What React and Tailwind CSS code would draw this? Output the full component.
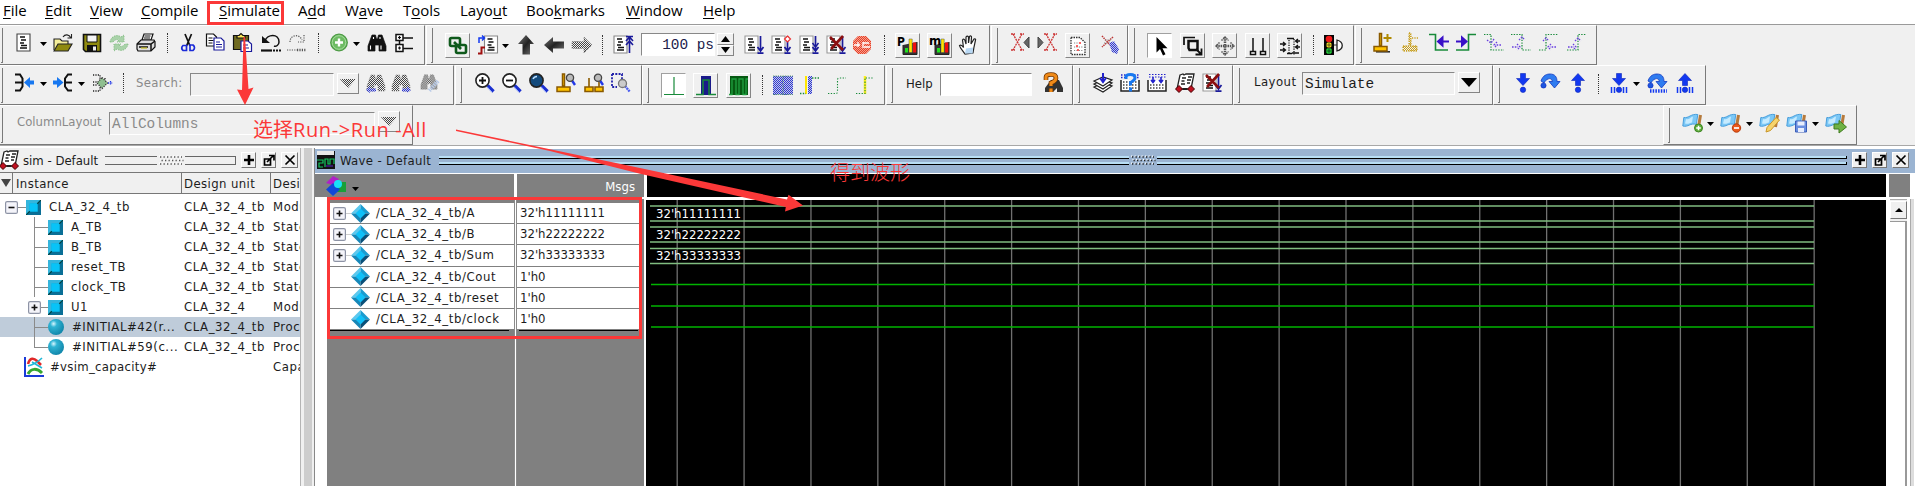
import React from "react";

const dot = "1.2 1.2";

const DocShape = ({ x = 1, c = "#444", d }) => (
  <g stroke={c} fill="#fff" strokeWidth="1.1">
    <path d={`M${x} 1h13v17h-13z`} strokeDasharray={d} />
    <path d={`M${x + 3} 4h5M${x + 4} 7h5M${x + 3} 10h4M${x + 4} 12.5h6M${x + 3} 15h7`} stroke="#111" strokeWidth="1.4" />
  </g>
);
const DownBlue = ({ x = 16.5 }) => (
  <path d={`M${x} 1v15M${x - 3} 12l3 4 3-4M${x - 3} 18.2h6`} stroke="#1a1a9a" strokeWidth="1.7" fill="none" />
);
const RedX = () => <path d="M4 2l13 13M17 1L5 14" stroke="#8b0f0f" strokeWidth="2.6" fill="none" />;
const Lens = ({ fill = "#fff", children }) => (
  <g>
    <path d="M12.5 12.5l6 6" stroke="#1a2fd0" strokeWidth="3.4" />
    <path d="M11.8 13.5l5 5.5" stroke="#9db4ff" strokeWidth="1" />
    <circle cx="7.5" cy="7.5" r="6.6" fill={fill} stroke="#222" strokeWidth="1.6" />
    {children}
  </g>
);
const MiniLens = () => (
  <g>
    <path d="M16 7.5l3 4.5" stroke="#2238e8" strokeWidth="2.4" />
    <circle cx="14" cy="4.8" r="3.6" fill="#bbb" stroke="#444" strokeWidth="1.3" />
  </g>
);
const Binoc = ({ hatch }) => (
  <g stroke={hatch ? "#777" : "#111"} strokeDasharray={hatch ? dot : undefined} strokeWidth=".7" fill={hatch ? "url(#hatch)" : "#111"}>
    <path d="M5 2h3.5l1 4h1l1-4H15l4 11v5h-7v-6H8v6H1v-5z" />
    {!hatch && <path d="M3.5 12.5v4M14 12.5v4M6.5 4v2M13 4v2" stroke="#fff" strokeWidth="1.1" />}
  </g>
);
const Bars = () => (
  <g>
    <path d="M5 9v9.5h14V6" fill="#333" stroke="#222" />
    <path d="M7 12h3v4.5H7z" fill="#20e020" />
    <path d="M11 3h3.2v13.5H11z" fill="#ffe600" stroke="#555" strokeWidth=".5" />
    <path d="M15 6.5h3.2v10H15z" fill="#f01010" />
  </g>
);
const Flag = () => (
  <g>
    <path d="M17.5 2l-2 12" stroke="#b57a3c" strokeWidth="3" />
    <path d="M.8 4.5c5 1 7-4 14-3l-1.500 10c-6-2-8 3-13.500 1.500z" fill="#7cc8f6" stroke="#4a9fdc" strokeWidth="1" />
    <path d="M3 6c3 1 4-1.500 7-2.500l-1 6c-2 .5-4 2-7 1z" fill="#c6ebff" />
  </g>
);
const Step = ({ up, base }) => (
  <g fill="#1238f0" stroke="#0b25b8" strokeWidth=".6">
    {up ? <path d="M10 .5l6.500 7h-4v5h-5v-5h-4z" /> : <path d="M7.500 .5h5v5h4L10 12.500 3.500 5.500h4z" />}
    <circle cx="10" cy="16.800" r="2.700" />
    {base && <path d="M2.500 14v6M5.500 14v6M14.500 14v6M17.500 14v6" stroke="#1238f0" strokeWidth="1.500" />}
  </g>
);
const Over = ({ base }) => (
  <g>
    <path d="M1 8C3 2 7 1 10 1c5 0 7 3 7 7.500h3L14.500 15 9 8.500h3.500C12 6 10 5 8 6 6 7 5 8 4 10z" fill="#2f7cf0" stroke="#1238c0" strokeWidth=".8" />
    <circle cx="3.500" cy="12.500" r="2.600" fill="#1c55e0" stroke="#0b25b8" strokeWidth=".6" />
    {base && <path d="M3 18h17" stroke="#1238f0" strokeWidth="3.600" strokeDasharray="1.500 1.200" />}
  </g>
);
const Pin = ({ s = 12 }) => (
  <g fill="#ffc400" stroke="#8a5a00" strokeWidth="1.500">
    <path d={`M${3 + s / 2 - 1} 1h2v12h-2zM3 14h${s}v4.500h-${s}z`} />
  </g>
);

const icons = {
  doc: <DocShape x={3} />,
  open: (
    <g stroke="#222" strokeWidth="1.1">
      <path d="M1 17V6h6l2 2h6v3" fill="#f5ef9a" /><path d="M1 18l4-7h14l-4 7z" fill="#8f8a10" />
      <path d="M10 4c2-3 6-3 8 1M18.500 1v4h-4" fill="none" />
    </g>
  ),
  save: (
    <g>
      <path d="M1.500 1.500h17v17h-15l-2-2z" fill="#8f8a10" stroke="#111" strokeWidth="1.600" />
      <path d="M5 2h10v7H5z" fill="#f4f4f4" stroke="#111" /><path d="M5 12h10v6H5z" fill="#111" /><path d="M11 13.500h3v4h-3z" fill="#eee" />
    </g>
  ),
  refresh: (
    <g fill="#a9d2a9" stroke="#86bd86" strokeWidth="1" strokeDasharray={dot}>
      <path d="M1 9c1-6 7-8 11-5l3-2v7H8l2-2c-3-1-4 0-6 2z" /><path d="M19 11c-1 6-7 8-11 5l-3 2v-7h7l-2 2c3 1 4 0 6-2z" />
    </g>
  ),
  print: (
    <g stroke="#111" strokeWidth="1.200">
      <path d="M6 7l2-6h9l-2 6z" fill="#fff" /><path d="M8.500 3h6M8 5h6" />
      <path d="M1 11l4-4h13l1 2v5l-4 4H2l-1-2z" fill="#ddd" /><path d="M1 11h14l4-3M15 11v7M3 14h9" fill="none" strokeWidth="1.500" /><path d="M5 15h6" stroke="#c9c020" />
    </g>
  ),
  cut: (
    <g fill="none" strokeWidth="1.700">
      <path d="M7 1l5 12M13.500 1L8.500 13" stroke="#111" /><path d="M5 12.500h3.500v5H5q-2.500-2.500 0-5zM12 12h3q3 2.500 0 5.500h-3z" stroke="#1b2bd8" />
    </g>
  ),
  copy: (
    <g fill="#fff" strokeWidth="1.200">
      <path d="M1.500 1h7l3 3v9h-10z" stroke="#111" /><path d="M3.500 5h4M3.500 7.500h5M3.500 10h4" stroke="#111" />
      <path d="M9 5h7l3 3v9H9z" stroke="#1a1a9a" /><path d="M11 9h4M11 11.500h6M11 14h6" stroke="#1a1a9a" />
    </g>
  ),
  paste: (
    <g strokeWidth="1.200">
      <path d="M1.500 2.500h15v14h-15z" fill="#6f6a20" stroke="#111" /><path d="M5 5V2.500h2L9 .5l2 2h2V5z" fill="#ffe95a" stroke="#111" />
      <path d="M9 8h7l3.500 3v7.500H9z" fill="#fff" stroke="#1a1a9a" /><path d="M11 12h5M11 15h6" stroke="#1a1a9a" />
    </g>
  ),
  undo: (
    <g fill="none" stroke="#111" strokeWidth="1.500">
      <path d="M4 8c2-7 14-8 14 1 0 3-3 5-5 4" /><path d="M1 3v7h8z" fill="#111" stroke="none" /><path d="M0 17.500h11" strokeWidth="2.200" /><path d="M12 17.500h8" strokeWidth="2.200" strokeDasharray="2 1" />
    </g>
  ),
  redo: (
    <g fill="none" stroke="#555" strokeWidth="1.200" strokeDasharray={dot}>
      <path d="M3 9c0-8 10-8 12-2M17 2v7h-6M0 17h11" /><path d="M10 17h9" strokeWidth="2.400" />
    </g>
  ),
  add: (
    <g>
      <circle cx="10" cy="9.500" r="8.300" fill="#6dbb63" stroke="#4c9a44" strokeWidth="1.200" /><circle cx="10" cy="9.500" r="6.800" fill="none" stroke="#a5dc9c" />
      <path d="M10 5.500v8M6 9.500h8" stroke="#fff" strokeWidth="2.400" />
    </g>
  ),
  binoc: <Binoc />,
  tree: (
    <g fill="#fff" stroke="#111" strokeWidth="1.500">
      <path d="M2 1.500h7v6H2zM2 11.500h7v7H2zM9.500 5H19M9.500 15.500H19M5.500 8v3" /><path d="M4 4.500h3M4 15h3M5.500 3v3M5.500 13.500v3" strokeWidth="1.200" />
    </g>
  ),
  link: (
    <g fill="none" stroke="#0f5a1c" strokeWidth="2.600"><rect x="2" y="2" width="10" height="8" rx="1.500" /><rect x="8" y="9" width="10" height="8" rx="1.500" /><path d="M6 6l7 7" /></g>
  ),
  wavedoc: (
    <g>
      <DocShape x={6.500} c="#888" /><path d="M1 8V3h5M4 .5L6.500 3 4 5.500" stroke="#1238f0" strokeWidth="1.500" fill="none" /><path d="M0 18.500h3.500v-6H7" stroke="#a01010" strokeWidth="2" fill="none" />
    </g>
  ),
  up: <path d="M10 0l8 9h-4v10.500H6.500V9H2z" fill="url(#steel)" />,
  left: <path d="M0 10l9-8v4.500h11v7H9V18z" fill="url(#steel)" />,
  right: <path d="M20 10l-8-8v4.500H0v7h12V18z" fill="url(#hatch)" stroke="#777" strokeDasharray={dot} strokeWidth=".8" />,
  restart: (<g><DocShape c="#888" /><path d="M13 1.500h7M16.500 2v16M13 6l3.500-4L20 6M13 10l3.500-4 3.500 4" stroke="#1a1a9a" strokeWidth="1.600" fill="none" /></g>),
  run: (<g><DocShape c="#999" /><DownBlue /></g>),
  runc: (<g><DocShape c="#999" /><DownBlue /><path d="M16.500 1l3 3-3 3-3-3z" fill="#fff" stroke="#e33" strokeWidth="1.200" /></g>),
  runall: (<g><DocShape c="#999" /><DownBlue /><path d="M13.500 8l3 4 3-4" stroke="#1a1a9a" strokeWidth="1.500" fill="none" /></g>),
  brk: (<g><DocShape c="#999" /><DownBlue /><RedX /></g>),
  stop: (<g><path d="M6 1h8l5 5v8l-5 5H6l-5-5V6z" fill="url(#redhatch)" /><path d="M2 10h6M6 7v5M11 7v6M11 8h6M12 12h6" stroke="#fff" strokeWidth="1.300" fill="none" /></g>),
  perf: (<g><Bars /><text x="-1" y="10" className="font-['DejaVu_Sans',sans-serif] text-[12px] font-bold">P</text></g>),
  mem: (<g><Bars /><text x="-1" y="9" className="font-['DejaVu_Sans',sans-serif] text-[13px] font-bold">m</text></g>),
  hand: (
    <g><path d="M6 19c-2-3-5-6-5.500-8.500 1.500-.8 3 .5 4 2L3.500 5c1-1.500 2-.5 2.500.5L7 9V2c1-1.500 2.200-1 2.500 0v6l1-6.500c1-1 2.200-.5 2 .7L12 9l3-5c1-.5 2 0 1.500 1L15 12l-1 6z" fill="#fff" stroke="#222" strokeWidth="1.200" /><path d="M6 18.500l1-5 7-1-.5 6z" fill="#b8d8f4" /></g>
  ),
  xl: (<g fill="none"><path d="M2 1l9 16M11 1L2 17M0 1h4M9 1h4M0 17h4M9 17h4" stroke="#c33" strokeWidth="1.300" strokeDasharray="2 .8" /><path d="M18 4l-5 5.500 5 5.500z" fill="#666" stroke="#444" /></g>),
  xr: (<g fill="none"><path d="M9 1l9 16M18 1L9 17M7 1h4M16 1h4M7 17h4M16 17h4" stroke="#c33" strokeWidth="1.300" strokeDasharray="2 .8" /><path d="M1 4l5 5.500L1 15z" fill="#666" stroke="#444" /></g>),
  dotdoc: (<g><path d="M3 1.500h9l5 5v12H3z" fill="#fff" stroke="#333" strokeWidth="1.300" strokeDasharray="1.500 1" /><path d="M6 7h5M6 11h9M6 14.500h9" stroke="#888" strokeDasharray={dot} /><path d="M9 9v2M12 6v2M10 13v2" stroke="#f33" strokeWidth="1.500" /></g>),
  xpen: (<g><path d="M2 1l10 11M13 2L2 12" stroke="#b33" strokeWidth="1.500" strokeDasharray="1.500 .8" /><path d="M5 5h6M4 8h5" stroke="#888" strokeDasharray={dot} /><path d="M9 8l5-2 5 8-2 5-5-2z" fill="url(#bluehatch)" /></g>),
  cursor: <path d="M6.500 1v15.500l3.500-3.500 3 6.500 2.500-1.200-3-6h5z" fill="#000" />,
  zoomsel: (<g fill="none" stroke="#111"><path d="M1 9V1.500h11" strokeWidth="1.700" /><path d="M5.500 12V5h9v9h-8z" strokeWidth="2.500" /><path d="M13 13l5 5M18.500 12.500v6h-6" strokeWidth="1.800" /></g>),
  move: (<g fill="none" stroke="#555" strokeWidth="1.500" strokeDasharray="1.500 .8"><path d="M10 1v18M1 10h18" strokeWidth="2.500" /><path d="M6.500 4.500L10 1l3.500 3.500M6.500 15.500L10 19l3.500-3.500M4.500 6.500L1 10l3.500 3.500M15.500 6.500L19 10l-3.500 3.500" /></g>),
  twocur: (<g fill="#fff" stroke="#111" strokeWidth="1.500"><path d="M5 2v13M15 2v13M2.500 15.500h5v3h-5zM12.500 15.500h5v3h-5z" /></g>),
  edges: (<g fill="none" stroke="#111" strokeWidth="1.300"><path d="M7 2.500h7M7 17.500h5" strokeWidth="1.500" /><path d="M9 4v14M14 3v16" strokeDasharray={dot} /><path d="M0 8h5M3 6l2.500 2L3 10M0 14h5M3 12l2.500 2L3 16M20 5h-4M18 3l-2.500 2L18 7M20 11h-4M18 9l-2.500 2 2.500 2M12 17h7" /></g>),
  light: (
    <g><path d="M1 0h10v20H1z" fill="#050505" /><circle cx="6" cy="4" r="3.300" fill="#f01818" /><circle cx="6" cy="10" r="2.700" fill="#f6e22a" /><circle cx="6" cy="16" r="3" fill="#22d13a" /><path d="M3 10h6M6 7v6M3 16h6M6 13v6" stroke="#111" strokeWidth=".6" /><path d="M14 5v11c7-2 7-9 0-11z" fill="#fff" stroke="#222" strokeWidth="1.300" /><path d="M11 10h3" stroke="#333" /></g>
  ),
  pinadd: (<g><path d="M3 18.800h14" stroke="#222" strokeWidth="1.500" /><g transform="translate(-2 -.5)"><Pin s={13} /></g><path d="M14.500 1v8M10.500 5h8" stroke="#b08a00" strokeWidth="2" /></g>),
  pindel: (<g fill="url(#goldhatch)" stroke="#c8a020" strokeWidth="1.300" strokeDasharray={dot}><path d="M8 0h2v12H8zM2 13h14v5H2zM11 5h7" /></g>),
  prev: (<g fill="none"><path d="M0 1.500h6.500V17H19" stroke="#188a3a" strokeWidth="1.600" /><path d="M20 8.500h-8M13.500 4.500l-4.500 4 4.500 4z" stroke="#3a10c8" strokeWidth="2" fill="#3a10c8" /></g>),
  next: (<g fill="none"><path d="M0 17h12.500V1.500H20" stroke="#188a3a" strokeWidth="1.600" /><path d="M0 8.500h7M6 4.500l4.500 4-4.500 4z" stroke="#3a10c8" strokeWidth="2" fill="#3a10c8" /></g>),
  e1: (<g fill="none"><path d="M0 1.500h7V17h13" stroke="#188a3a" strokeWidth="1.200" strokeDasharray="1.400 1.300" /><path d="M3 7l4 3 3-4M17 12h-6M13 9l-3 3 3 3" stroke="#6a40e0" strokeWidth="1.300" strokeDasharray="1.600 1.200" /></g>),
  e2: (<g fill="none"><path d="M0 1.500h11V17h9" stroke="#188a3a" strokeWidth="1.200" strokeDasharray="1.400 1.300" /><path d="M8 7l3-3 3 3M1 14h6M6 11l3 3-3 3" stroke="#6a40e0" strokeWidth="1.300" strokeDasharray="1.600 1.200" /></g>),
  e3: (<g fill="none"><path d="M0 17h7V1.500h12" stroke="#188a3a" strokeWidth="1.200" strokeDasharray="1.400 1.300" /><path d="M4 8l3-3 3 3M17 14h-6M12 11l-3 3 3 3" stroke="#6a40e0" strokeWidth="1.300" strokeDasharray="1.600 1.200" /></g>),
  e4: (<g fill="none"><path d="M1 17h11V1.500h8" stroke="#188a3a" strokeWidth="1.200" strokeDasharray="1.400 1.300" /><path d="M9 8l3-3 3 3M2 14h6M7 11l3 3-3 3" stroke="#6a40e0" strokeWidth="1.300" strokeDasharray="1.600 1.200" /></g>),
  drv: (<g fill="none"><path d="M1 1.500h5l2.500 4v8l-2.500 4H1M1 9.500h7" stroke="#111" strokeWidth="2" /><path d="M20 7.500v4h-4v3.500L10 9.500l6-5.500v3.500z" fill="#1878f0" /></g>),
  rdr: (<g fill="none"><path d="M19 1.500h-4l-3 4v8l3 4h4M12 9.500h7" stroke="#111" strokeWidth="2" /><path d="M0 7.500v4h4v3.500l6.500-5.500L4 4v3.500z" fill="#1878f0" /></g>),
  gate: (<g fill="none" stroke="#222" strokeWidth="1.300" strokeDasharray={dot}><path d="M0 2h7v4M0 9h4M0 12h4M0 18h7v-4M12 5v4" /><path d="M9 4.500L14.500 10 9 15.500 4 10z" fill="#8fbf8f" stroke="#333" /><path d="M15 10h5M17.500 8v4" stroke="#2238e8" /></g>),
  bl: (<g><Binoc hatch /><path d="M0 17l4-4v2.500h6v3H4V20z" fill="url(#bluehatch)" /></g>),
  br: (<g><Binoc hatch /><path d="M20 17l-4-4v2.500h-5v3h5V20z" fill="url(#bluehatch)" /></g>),
  bp: (<g><g transform="scale(.9)"><Binoc hatch /></g><path d="M18 8l-9 10" stroke="#b9cbe8" strokeWidth="4" strokeDasharray="1.500 .8" /></g>),
  zin: <Lens><path d="M7.500 4v7M4 7.500h7" stroke="#111" strokeWidth="1.800" /></Lens>,
  zout: <Lens><path d="M4 7.500h7" stroke="#111" strokeWidth="1.800" /></Lens>,
  zfull: <Lens fill="#134a7c"><path d="M4 6c1-2 2-2.500 4-2.500" stroke="#bfe0ff" strokeWidth="1.500" fill="none" /></Lens>,
  zcur: (<g><g transform="translate(-2 0)"><Pin s={13} /></g><MiniLens /></g>),
  ztwo: (<g><path d="M5 5v9M1 14h8v4.500H1zM15 9v5M11 14h8v4.500h-8z" fill="#ffc400" stroke="#8a5a00" strokeWidth="1.600" /><MiniLens /></g>),
  zsel: (<g><path d="M1 1h10v6M1 1v13h5" fill="none" stroke="#2222aa" strokeWidth="1.800" strokeDasharray="2 1.300" /><path d="M14 13l5 6" stroke="#4a5cf0" strokeWidth="2.400" strokeDasharray="2 .6" /><circle cx="11.500" cy="10.500" r="4" fill="#ccc" stroke="#777" strokeWidth="1.300" /></g>),
  w1: <path d="M0 18.500h20M10 1v17" stroke="#188a3a" strokeWidth="1.200" fill="none" />,
  w2: (<g fill="none"><path d="M5 0h10v19H5z" fill="#1a1a8a" /><path d="M0 18.500h7V4h6v14.500h7" stroke="#188a3a" strokeWidth="1.500" /></g>),
  w3: (<g fill="none"><path d="M1 0h18v19H1z" fill="#065a12" /><path d="M0 18.500h3V3h4v15.500h3V3h4v15.500h3V3h2" stroke="#1fa040" strokeWidth="1.300" /></g>),
  w4: (<g><path d="M0 1h20v19H0z" fill="url(#bluehatch)" /><path d="M0 1h20M0 19.500h20M10 1v18" stroke="#5a9a6a" strokeDasharray={dot} /></g>),
  w5: (<g fill="none"><path d="M5 1h2v18H5z" fill="#ffe600" /><path d="M8 1h4v18H8z" fill="url(#bluehatch)" /><path d="M0 18.500h6M12 3h7" stroke="#188a3a" strokeWidth="1.300" strokeDasharray="1.400 1.400" /></g>),
  w6: <path d="M1 18.500h8q1.500 0 1.500-2V5q0-2 2-2H19" stroke="#188a3a" strokeWidth="1.100" strokeDasharray="1.300 1.500" fill="none" />,
  w7: (<g fill="none"><path d="M10 1v18" stroke="#ffee20" strokeWidth="2.500" /><path d="M1 18.500h9V3h9" stroke="#188a3a" strokeWidth="1.100" strokeDasharray="1.300 1.500" /></g>),
  helpb: (<g><path d="M8 7h8l4 8v4h-6v-4l-4 4H2v-4z" fill="#333" /><path d="M3 7V4q0-2.500 5-2.500t5 3.500q0 3-5 5v3M8 15.500v3.500" fill="none" stroke="#6b3200" strokeWidth="4.600" /><path d="M3 7V4q0-2.500 5-2.500t5 3.500q0 3-5 5v3M8 15.500v3.500" fill="none" stroke="#f08a18" strokeWidth="3.100" /></g>),
  stack: (<g fill="#fff" stroke="#222" strokeWidth="1.200"><path d="M1 14l9-4 9 3-9 6z" /><path d="M1 11l9-4 9 3-9 6z" /><path d="M1 8l9-4 9 3-9 6z" /><path d="M10 0v8M7 5l3 4 3-4" stroke="#2222cc" strokeWidth="2" fill="none" /></g>),
  gridq: (<g><path d="M1 7v11h18V7" fill="#fff" stroke="#222" strokeWidth="1.500" /><path d="M1 2h5M14 2h5M1 4.500h5M14 4.500h5" stroke="#2222cc" strokeWidth="1.300" strokeDasharray="1.500 1.500" /><path d="M3 9h15M3 12h15M3 15h15" stroke="#444" strokeWidth="1.300" strokeDasharray="1.500 1.500" /><path d="M6 6V4q0-2.500 4.500-2.500T15 5q0 2-4.500 4.500v3M10.500 14.500v4" stroke="#1878f0" strokeWidth="3" fill="none" /></g>),
  grida: (<g><path d="M1 7v11h18V7" fill="#fff" stroke="#222" strokeWidth="1.500" /><path d="M2 1.500h17M2 4h17" stroke="#2222cc" strokeWidth="1.200" strokeDasharray="1.500 1.500" /><path d="M3 12h15M3 15h15" stroke="#444" strokeWidth="1.300" strokeDasharray="1.500 1.500" /><path d="M6 4v5M4 7l2 2.500L8 7M14 4v5M12 7l2 2.500L16 7" stroke="#2222cc" strokeWidth="1.600" fill="none" /></g>),
  scroll: (
    <g><path d="M5 2l3-1 1 1 2-1h8l-3 15H2z" fill="#fff" stroke="#222" strokeWidth="1.300" /><path d="M7 5h4M6.500 8h3M6 11h4M13 4h4M12 7h4M12 10h3" stroke="#222" strokeWidth="1.300" /><path d="M4 12.500l3.500 3.500L4 19.500.5 16zM16 12.500l3.500 3.500-3.500 3.500-3.500-3.500z" fill="#c01020" stroke="#400" strokeWidth="1" /><path d="M8 16h4" stroke="#111" strokeWidth="1.500" /></g>
  ),
  into: <Step />, over: <Over />, out: <Step up />, intoc: <Step base />, overc: <Over base />, outc: <Step up base />,
  fadd: (<g><Flag /><circle cx="15.500" cy="15" r="4" fill="#5fae3d" stroke="#3d8422" /><path d="M15.500 12.700v4.600M13.200 15h4.600" stroke="#fff" strokeWidth="1.500" /></g>),
  fdel: (<g><Flag /><circle cx="15.500" cy="15" r="4.200" fill="#ea5a1c" stroke="#b93c0c" /><path d="M13 15h5" stroke="#fff" strokeWidth="1.700" /></g>),
  fedit: (<g><Flag /><path d="M19.500 7l-9 10.500-4.500 1.500 1-4.500 9-10z" fill="#f6d36b" stroke="#c9962a" /></g>),
  fsave: (<g><Flag /><path d="M8.500 8h11v11h-11z" fill="#6a8fe0" stroke="#3a5cb8" /><path d="M10.500 8.500h7v4h-7zM11 15h6v4h-6z" fill="#e8eefc" /></g>),
  fgo: (<g><Flag /><path d="M8 11h5V7.500l7.500 6.500-7.500 6v-4H8z" fill="#6fb244" stroke="#3f7d1e" /></g>),
};

const Icon = ({ n, c = "" }) => (
  <svg viewBox="0 0 20 20" className={`h-5 w-5 shrink-0 overflow-visible ${c}`}>{icons[n]}</svg>
);
const Btn = ({ n, c = "", on }) => (
  <div className={`flex h-[25px] w-[25px] shrink-0 items-center justify-center border-[1.5px] ${on ? "border-[#a0a0a0] border-r-white border-b-white bg-white" : "border-white border-r-[#858585] border-b-[#858585] bg-[#f0f0f0]"} ${c}`}>
    <svg viewBox="0 0 20 20" className="h-5 w-5 shrink-0 overflow-visible">{icons[n]}</svg>
  </div>
);
const Caret = ({ c = "" }) => (
  <svg viewBox="0 0 7 4" className={`mt-[9px] h-1 w-[7px] shrink-0 ${c}`}><path d="M0 0h7L3.500 4z" fill="#000" /></svg>
);
const Sep = ({ c = "" }) => <div className={`h-5 w-px shrink-0 border-l border-dotted border-[#333] ${c}`} />;
const Group = ({ c, children }) => (
  <div className={`flex h-10 shrink-0 items-start border border-white border-r-[#7a7a7a] border-b-[#7a7a7a] pt-[7px] pl-1 ${c}`}>
    <div className="-mt-[5px] h-[35px] w-[2px] shrink-0 border-r border-b border-[#7a7a7a]" />
    {children}
  </div>
);
const Field = ({ c = "", children }) => (
  <div className={`flex h-[23px] shrink-0 items-center border border-t-[#888] border-l-[#888] border-r-white border-b-white pt-px pl-[2px] font-['Liberation_Mono',monospace] text-[14.400px] ${c}`}>{children}</div>
);
const Drop = ({ c = "", grey }) => (
  <div className={`flex h-[21px] w-[22px] shrink-0 items-center justify-center border-[1.5px] border-white border-r-[#858585] border-b-[#858585] ${c}`}>
    <svg viewBox="0 0 16 9" className="h-[9px] w-4"><path d="M0 0h16L8 9z" fill={grey ? "url(#hatch)" : "#000"} /></svg>
  </div>
);

const menus = [
  ["", "F", "ile", "w-[42px]"], ["", "E", "dit", "w-[45px]"], ["", "V", "iew", "w-[51px]"], ["", "C", "ompile", "w-[78px]"],
  ["", "S", "imulate", "w-[79px]"], ["A", "d", "d", "w-[47px]"], ["W", "a", "ve", "w-[58px]"], ["T", "o", "ols", "w-[57px]"],
  ["Layo", "u", "t", "w-[66px]"], ["Boo", "k", "marks", "w-[100px]"], ["", "W", "indow", "w-[77px]"], ["", "H", "elp", "w-[50px]"],
];

const Cube = () => (
  <svg viewBox="0 0 16 16" className="h-[15px] w-[15px] shrink-0">
    <path d="M0 0h16v16H0z" fill="#0a6f96" /><path d="M0 0h16L12 4H4v8l-4 4z" fill="#35b5dc" /><path d="M3.500 3.500h9v9h-9z" fill="#08c3f7" /><path d="M0 16l4-4M12 4l4-4" stroke="#044" strokeWidth="1.300" />
  </svg>
);
const Ball = () => (
  <svg viewBox="0 0 16 16" className="h-4 w-4 shrink-0"><circle cx="8" cy="8" r="8" fill="url(#ball)" /></svg>
);
const Expand = ({ minus }) => (
  <svg viewBox="0 0 13 13" className="h-[13px] w-[13px] shrink-0">
    <rect x=".6" y=".6" width="11.800" height="11.800" rx="1.500" fill="#f4f4fa" stroke="#8d93a5" strokeWidth="1.200" />
    <path d={minus ? "M3.500 6.500h6" : "M3.500 6.500h6M6.500 3.500v6"} stroke="#111" strokeWidth="1.600" />
  </svg>
);

const tree = [
  ["root", "CLA_32_4_tb", "CLA_32_4_tb", "Modu"],
  ["leaf", "A_TB", "CLA_32_4_tb", "State"],
  ["leaf", "B_TB", "CLA_32_4_tb", "State"],
  ["leaf", "reset_TB", "CLA_32_4_tb", "State"],
  ["leaf", "clock_TB", "CLA_32_4_tb", "State"],
  ["node", "U1", "CLA_32_4", "Modu"],
  ["proc", "#INITIAL#42(r...", "CLA_32_4_tb", "Proc"],
  ["last", "#INITIAL#59(c...", "CLA_32_4_tb", "Proc"],
  ["cap", "#vsim_capacity#", "", "Capa"],
];

const Branch = ({ kind }) => (
  <div className="flex h-5 w-[14px] shrink-0 flex-col">
    <div className="h-[11px] border-b border-l border-[#8a8a8a]" />
    <div className={kind === "last" ? "h-[9px]" : "h-[9px] border-l border-[#8a8a8a]"} />
  </div>
);

const TreeRow = ({ row: [kind, name, unit, type] }) => (
  <div className={`flex h-5 items-center tracking-[0.55px] ${kind === "proc" ? "bg-[#bfccda]" : ""}`}>
    <div className="flex h-5 w-[184px] shrink-0 items-center whitespace-nowrap">
      {kind === "root" && (<><div className="w-[5px]" /><Expand minus /><div className="h-px w-2 bg-[#8a8a8a]" /><Cube /></>)}
      {kind === "leaf" && (<><div className="w-[34px]" /><Branch kind={kind} /><Cube /></>)}
      {kind === "node" && (<><div className="w-[28px]" /><Expand /><div className="h-px w-[7px] bg-[#8a8a8a]" /><Cube /></>)}
      {(kind === "proc" || kind === "last") && (<><div className="w-[34px] shrink-0" /><Branch kind={kind} /><Ball /></>)}
      {kind === "cap" && (
        <svg viewBox="0 0 20 20" className="ml-[24px] h-5 w-5 shrink-0">
          <path d="M1 0v19h19" fill="none" stroke="#1a3bd8" strokeWidth="2" /><path d="M4 7c2-7 6-6 9-3l4 4" fill="none" stroke="#e02828" strokeWidth="2.600" />
          <path d="M4 9c4-1 9-3 14-8M8 5l10 6" fill="none" stroke="#20b8d8" strokeWidth="1.600" /><path d="M4 17c3-6 9-6 14-1" fill="none" stroke="#36a832" strokeWidth="3" />
        </svg>
      )}
      <span className={kind === "cap" ? "ml-[6px] pb-[2px] tracking-[0.3px]" : "ml-[8px] pb-[2px]"}>{name}</span>
    </div>
    <span className="w-[89px] shrink-0 pb-[2px]">{unit}</span>
    <span className="pb-[2px]">{type}</span>
  </div>
);

const signals = [
  ["/CLA_32_4_tb/A", "32'h11111111", true], ["/CLA_32_4_tb/B", "32'h22222222", true], ["/CLA_32_4_tb/Sum", "32'h33333333", true],
  ["/CLA_32_4_tb/Cout", "1'h0", false], ["/CLA_32_4_tb/reset", "1'h0", false], ["/CLA_32_4_tb/clock", "1'h0", false],
];

const WinBtn = ({ k, c = "w-[15px]" }) => (
  <div className={`ml-[5px] flex h-4 shrink-0 items-center justify-center border border-white border-r-[#777] border-b-[#777] bg-[#f0f0f0] ${c}`}>
    <svg viewBox="0 0 12 12" className="h-3 w-3 shrink-0" fill="none" stroke="#000">
      {k === "plus" && <path d="M6 1v10M1 6h10" strokeWidth="2.600" />}
      {k === "pop" && <path d="M1.500 5h6v6h-6zM4 8l6-6M6 1.500h5v5" strokeWidth="1.700" />}
      {k === "close" && <path d="M1.500 1.500l9 9M10.500 1.500l-9 9" strokeWidth="1.700" />}
    </svg>
  </div>
);
const Dots = ({ c = "text-[#555]" }) => (
  <svg viewBox="0 0 22 9" className={`mx-[3px] h-[9px] w-[22px] shrink-0 overflow-visible ${c}`}>
    <path d="M-1 .2h22M.5 3.700h22M-1 7.200h22" stroke="#fff" strokeWidth="1.200" strokeDasharray="1.300 2.200" />
    <path d="M0 1h22M1.500 4.500h22M0 8h22" stroke="currentColor" strokeWidth="1.300" strokeDasharray="1.300 2.200" />
  </svg>
);

const gridLines = Array.from({ length: 18 }, (_, i) => 31.200 + i * 66.880);

export default function App() {
  return (
    <div className="relative h-[486px] w-[1915px] overflow-hidden bg-[#f0f0f0] font-['DejaVu_Sans_Condensed','DejaVu_Sans',sans-serif] text-[13px] leading-none text-[#1c1c1c] [font-stretch:condensed]">
      <svg className="absolute h-0 w-0">
        <defs>
          <linearGradient id="steel" x1="0" y1="0" x2="1" y2="1"><stop offset="0" stopColor="#777" /><stop offset=".5" stopColor="#222" /><stop offset="1" stopColor="#777" /></linearGradient>
          <radialGradient id="ball" cx=".35" cy=".3" r=".7"><stop offset="0" stopColor="#d8f6ff" /><stop offset=".3" stopColor="#30b4d4" /><stop offset="1" stopColor="#1288ac" /></radialGradient>
          <pattern id="hatch" width="2" height="2" patternUnits="userSpaceOnUse"><path d="M0 0h1v1H0zM1 1h1v1H1z" fill="#444" /></pattern>
          <pattern id="redhatch" width="2" height="2" patternUnits="userSpaceOnUse"><path d="M0 0h2v2H0z" fill="#f4a090" /><path d="M0 0h1v1H0zM1 1h1v1H1z" fill="#e84028" /></pattern>
          <pattern id="bluehatch" width="2" height="2" patternUnits="userSpaceOnUse"><path d="M0 0h2v2H0z" fill="#c4c8e8" /><path d="M0 0h1v1H0zM1 1h1v1H1z" fill="#3038d0" /></pattern>
          <pattern id="goldhatch" width="2" height="2" patternUnits="userSpaceOnUse"><path d="M0 0h1v1H0zM1 1h1v1H1z" fill="#c8a020" /></pattern>
        </defs>
      </svg>

      <div className="flex h-[25px] items-start border-b border-[#9a9a9a] bg-white pt-px pl-[3px] font-['Open_Sans','Noto_Sans',sans-serif] text-[15px] leading-[19px] font-normal text-black [font-stretch:normal]">
        {menus.map(([a, u, b, w]) => (
          <span key={a + u + b} className={`shrink-0 ${w}`}>{a}<span className="underline decoration-1 underline-offset-2">{u}</span>{b}</span>
        ))}
      </div>

      <div className="flex">
        <Group c="-ml-1 w-[429px]">
          <Icon n="doc" c="ml-[11px]" /><Caret c="ml-[6px]" /><Icon n="open" c="ml-[6px]" /><Icon n="save" c="ml-[9px]" /><Icon n="refresh" c="ml-[7px]" /><Icon n="print" c="ml-[7px]" />
          <Sep c="ml-[11px]" /><Icon n="cut" c="ml-[10px]" /><Icon n="copy" c="ml-[7px]" /><Icon n="paste" c="ml-[7px]" /><Icon n="undo" c="ml-[9px]" /><Icon n="redo" c="ml-[6px]" />
          <Sep c="ml-[11px]" /><Icon n="add" c="ml-[10px]" /><Caret c="ml-[4px]" /><Icon n="binoc" c="ml-[7px]" /><Icon n="tree" c="ml-[7px]" />
        </Group>
        <Group c="ml-px w-[564px]">
          <Btn n="link" c="ml-[12px]" /><Icon n="wavedoc" c="ml-[8px] mt-[2px]" /><Caret c="ml-[4px] translate-y-[2px]" /><Icon n="up" c="ml-[7px] mt-[2px]" /><Icon n="left" c="ml-[8px] mt-[2px]" /><Icon n="right" c="ml-[8px] mt-[2px]" />
          <Sep c="ml-[10px] mt-[2px]" /><Icon n="restart" c="ml-[10px] mt-[2px]" />
          <Field c="ml-[8px] w-[74px] justify-end bg-white text-[#20204a]">100 ps</Field>
          <div className="ml-[2px] flex h-[23px] w-[17px] shrink-0 flex-col">
            {["M0 6h9L4.500 0z", "M0 0h9L4.500 6z"].map((d) => (
              <div key={d} className="flex flex-1 items-center justify-center border border-white border-r-[#858585] border-b-[#858585]">
                <svg viewBox="0 0 9 6" className="h-[6px] w-[9px]"><path d={d} /></svg>
              </div>
            ))}
          </div>
          <Icon n="run" c="ml-[10px] mt-[2px]" /><Icon n="runc" c="ml-[7px] mt-[2px]" /><Icon n="runall" c="ml-[8px] mt-[2px]" /><Icon n="brk" c="ml-[7px] mt-[2px]" /><Icon n="stop" c="ml-[6px] mt-[2px]" />
          <Sep c="ml-[12px] mt-[2px]" /><Btn n="perf" c="ml-[10px]" /><Btn n="mem" c="ml-[7px]" /><Icon n="hand" c="ml-[7px] mt-[2px]" />
        </Group>
        <Group c="ml-px w-[137px]">
          <Icon n="xl" c="ml-[13px]" /><Icon n="xr" c="ml-[6px]" /><Btn n="dotdoc" c="ml-[8px]" /><Icon n="xpen" c="ml-[10px] mt-[2px]" />
        </Group>
        <Group c="w-[226px]">
          <Btn n="cursor" on c="ml-[12px]" /><Btn n="zoomsel" c="ml-[8px]" /><Btn n="move" c="ml-[7px]" /><Btn n="twocur" c="ml-[8px]" /><Btn n="edges" c="ml-[7px]" />
          <Sep c="ml-[11px] mt-[2px]" /><Icon n="light" c="ml-[9px] mt-[2px]" />
        </Group>
        <Group c="ml-px w-[242px]">
          <Icon n="pinadd" c="ml-[11px]" /><Icon n="pindel" c="ml-[8px]" /><Icon n="prev" c="ml-[8px]" /><Icon n="next" c="ml-[7px]" /><Icon n="e1" c="ml-[8px]" /><Icon n="e2" c="ml-[7px]" /><Icon n="e3" c="ml-[8px]" /><Icon n="e4" c="ml-[7px]" />
        </Group>
      </div>

      <div className="flex">
        <Group c="-ml-1 w-[458px]">
          <Icon n="drv" c="ml-[11px]" /><Caret c="ml-[6px]" /><Icon n="rdr" c="ml-[6px]" /><Caret c="ml-[5px]" /><Icon n="gate" c="ml-[8px]" /><Sep c="ml-[10px]" />
          <span className="mt-[3px] ml-[12px] w-[54px] shrink-0 tracking-[0.35px] text-[#8a8a8a]">Search:</span>
          <Field c="w-[144px]" /><Drop grey c="ml-[3px]" /><Icon n="bl" c="ml-[7px]" /><Icon n="br" c="ml-[5px]" /><Icon n="bp" c="ml-[9px]" />
        </Group>
        <Group c="ml-px w-[187px]">
          <Icon n="zin" c="ml-[13px]" /><Icon n="zout" c="ml-[7px]" /><Icon n="zfull" c="ml-[7px]" /><Icon n="zcur" c="ml-[7px]" /><Icon n="ztwo" c="ml-[8px]" /><Icon n="zsel" c="ml-[7px]" />
        </Group>
        <Group c="w-[243px]">
          <Btn n="w1" on c="ml-[12px]" /><Btn n="w2" c="ml-[7px]" /><Btn n="w3" c="ml-[8px]" /><Sep c="ml-[11px] mt-[2px]" />
          <Icon n="w4" c="ml-[10px] mt-[2px]" /><Icon n="w5" c="ml-[7px] mt-[2px]" /><Icon n="w6" c="ml-[7px] mt-[2px]" /><Icon n="w7" c="ml-[8px] mt-[2px]" />
        </Group>
        <Group c="ml-px w-[187px]">
          <span className="mt-[4px] ml-[13px] w-[34px] shrink-0">Help</span><Field c="w-[92px] bg-white" /><Icon n="helpb" c="ml-[11px]" />
        </Group>
        <Group c="w-[160px]">
          <Icon n="stack" c="ml-[13px]" /><Icon n="gridq" c="ml-[7px]" /><Icon n="grida" c="ml-[7px]" /><Icon n="scroll" c="ml-[8px]" /><Icon n="brk" c="ml-[7px]" />
        </Group>
        <Group c="w-[260px]">
          <span className="mt-[2px] ml-[14px] w-[48px] shrink-0 tracking-[0.45px]">Layout</span><Field c="-mt-px w-[153px]">Simulate</Field><Drop c="ml-[3px] -mt-px" />
        </Group>
        <Group c="w-[213px]">
          <Icon n="into" c="ml-[13px]" /><Icon n="over" c="ml-[7px]" /><Icon n="out" c="ml-[8px]" /><Sep c="ml-[10px] mt-px" /><Icon n="intoc" c="ml-[10px]" /><Caret c="ml-[4px]" /><Icon n="overc" c="ml-[7px]" /><Icon n="outc" c="ml-[8px]" />
        </Group>
      </div>

      <div className="flex">
        <Group c="-ml-1 w-[417px]">
          <span className="mt-[2px] ml-[14px] w-[92px] shrink-0 text-[#8a8a8a]">ColumnLayout</span>
          <Field c="-mt-px w-[266px] text-[#8a8a8a]">AllColumns</Field><Drop grey c="ml-[3px] -mt-[2px]" />
        </Group>
        <Group c="ml-[1250px] w-[194px]">
          <Icon n="fadd" c="ml-[13px]" /><Caret c="ml-[4px]" /><Icon n="fdel" c="ml-[7px]" /><Caret c="ml-[5px]" /><Icon n="fedit" c="ml-[7px]" /><Icon n="fsave" c="ml-[7px]" /><Caret c="ml-[5px]" /><Icon n="fgo" c="ml-[7px]" />
        </Group>
      </div>

      <div className="h-[3px] border-t border-[#a8a8a8] bg-white" />

      <div className="flex h-[338px] bg-[#f0f0f0]">
        <div className="flex h-full w-[301px] shrink-0 flex-col overflow-hidden border-r border-[#b4b4b4] bg-white">
          <div className="flex h-6 shrink-0 items-center bg-[#f0f0f0]">
            <Icon n="scroll" c="-ml-px" /><span className="ml-[4px] w-[81px] shrink-0 whitespace-nowrap">sim - Default</span>
            <div className="ml-px h-[9px] w-[52px] border-y border-[#666]" /><Dots /><div className="h-[9px] w-[51px] border-y border-r border-[#666]" />
            <WinBtn k="plus" /><WinBtn k="pop" /><WinBtn k="close" c="w-[17px]" />
          </div>
          <div className="mb-[3px] flex h-[22px] shrink-0 border-y border-t-[#777] border-b-[#777] bg-[#f0f0f0] tracking-[0.4px] whitespace-nowrap">
            <div className="flex w-[13px] shrink-0 items-center justify-center border-r border-[#777]"><svg viewBox="0 0 10 8" className="h-2 w-[10px]"><path d="M0 0h10L5 8z" fill="#444" /></svg></div>
            <div className="flex w-[169px] shrink-0 items-center border-r border-[#777] pl-[3px]">Instance</div>
            <div className="flex w-[89px] shrink-0 items-center border-r border-[#777] pl-[2px]">Design unit</div>
            <div className="flex flex-1 items-center pl-[2px]">Desi</div>
          </div>
          {tree.map((r) => <TreeRow key={r[1]} row={r} />)}
        </div>
        <div className="ml-[3px] h-full w-2 shrink-0 bg-[#cdcdcd]" />
        <div className="ml-[2px] flex h-full flex-1 flex-col overflow-hidden border-l border-[#888] bg-white">
          <div className="mt-px flex h-6 shrink-0 items-center bg-[#9bb4d2] pb-[2px] pl-[2px]">
            <svg viewBox="0 0 18 18" className="h-[18px] w-[18px] shrink-0">
              <path d="M0 0h18v18H0z" fill="#111" /><path d="M0 0h17v4H0z" fill="#e8e8e8" /><path d="M0 9h6v3H2v4h4M8 16V8h3v5h2V8h4v5" stroke="#14c860" strokeWidth="1.200" fill="none" /><path d="M9 15h7" stroke="#5a20c8" fill="none" />
            </svg>
            <span className="ml-[5px] w-[99px] shrink-0 tracking-[0.35px] whitespace-nowrap">Wave - Default</span>
            <div className="flex w-[690px] shrink-0 flex-col gap-[3px]"><div className="h-[3px] border-b border-black bg-[#b9def4]" /><div className="h-[3px] border-b border-black bg-[#b9def4]" /></div>
            <Dots c="text-[#222]" />
            <div className="flex w-[690px] shrink-0 flex-col gap-[3px]"><div className="h-[3px] border-r border-b border-black bg-[#b9def4]" /><div className="h-[3px] border-r border-b border-black bg-[#b9def4]" /></div>
            <WinBtn k="plus" /><WinBtn k="pop" /><WinBtn k="close" c="w-[17px]" />
          </div>
          <div className="mt-px flex h-[23px] shrink-0">
            <div className="flex w-[199px] shrink-0 items-center bg-[#808080] pl-[11px]">
              <svg viewBox="0 0 20 20" className="h-5 w-5"><path d="M11 6h9v10h-9z" fill="#18a038" /><path d="M0 7l7-7 6 3-6 6z" fill="#b020c8" /><path d="M7 7l7 6.500L7 20 0 13.500z" fill="#1048d8" /><circle cx="12" cy="8" r="4" fill="#18e0f8" /></svg>
              <svg viewBox="0 0 7 4" className="mt-[6px] ml-[6px] h-1 w-[7px]"><path d="M0 0h7L3.500 4z" /></svg>
            </div>
            <div className="ml-[3px] flex w-[127px] shrink-0 items-center justify-end bg-[#808080] pt-[2px] pr-[9px] text-white">Msgs</div>
            <div className="ml-[3px] w-[1239px] shrink-0 bg-black" />
            <div className="ml-[3px] w-[21px] shrink-0 bg-[#808080]" />
          </div>
          <div className="flex flex-1 pt-[2px]">
            <div className="ml-[12px] flex w-[187px] shrink-0 flex-col bg-[#808080] pt-1">
              {signals.map(([n, , ex]) => (
                <div key={n} className="flex h-[21.200px] shrink-0 items-center border-b border-[#808080] bg-white pl-[6px]">
                  <div className="w-[13px] shrink-0 pt-px">{ex && <Expand />}</div>
                  <div className={`h-px w-[5px] shrink-0 ${ex ? "bg-[#ccc]" : ""}`} />
                  <svg viewBox="0 0 19 19" className="h-[19px] w-[19px] shrink-0"><path d="M9.500 0v9.500H0z" fill="#5cc8ee" /><path d="M9.500 0v9.500H19z" fill="#1a9cd0" /><path d="M9.500 19V9.500H0z" fill="#1787b8" /><path d="M9.500 19V9.500H19z" fill="#0a4f78" /><path d="M9.500 4.500l5 5-5 5-5-5z" fill="#10c0f8" /></svg>
                  <span className="ml-[6px] pb-px tracking-[0.6px]">{n}</span>
                </div>
              ))}
              <div className="ml-[3px] h-px w-[179px] bg-black" />
            </div>
            <div className="flex w-[3px] shrink-0 justify-center bg-[#8a8a8a]"><div className="w-px bg-white" /></div>
            <div className="flex w-[127px] shrink-0 flex-col bg-[#808080] pt-1">
              {signals.map(([n, v]) => (<div key={n} className="mr-[4px] flex h-[21.200px] shrink-0 items-center border-b border-[#808080] bg-white pb-px pl-[3px]">{v}</div>))}
              <div className="ml-[2px] h-px w-[119px] bg-black" />
            </div>
            <div className="relative mt-px ml-[2px] w-[1240px] shrink-0 bg-black">
              <svg viewBox="0 0 1240 286" className="absolute inset-0 h-[286px] w-[1240px]">
                {gridLines.map((x) => <path key={x} d={`M${x} 0v286`} stroke="#707070" strokeWidth="1.300" />)}
                {[6, 21, 27, 42, 48.500, 63.500].map((y) => <path key={y} d={`M4 ${y}H1168`} stroke="#80bd80" strokeWidth="1.400" />)}
                {[84.500, 106, 127].map((y) => <path key={y} d={`M5 ${y}H1168`} stroke="#00b400" strokeWidth="1.500" />)}
              </svg>
              <div className="relative flex flex-col pt-[3px] pl-[10px] text-white">
                {signals.slice(0, 3).map(([n, v]) => <span key={n} className="flex h-[21.200px] items-center">{v}</span>)}
              </div>
            </div>
            <div className="ml-[4px] flex w-[17px] shrink-0 flex-col border-t border-[#aaa] bg-[#f0f0f0]">
              <div className="mt-px flex h-[18px] items-center justify-center border border-white border-r-[#777] border-b-[#777]"><svg viewBox="0 0 8 4" className="h-1 w-2"><path d="M0 4h8L4 0z" /></svg></div>
              <div className="mt-[2px] flex-1 border-t border-r-2 border-[#999] bg-white" />
            </div>
            <div className="ml-[3px] w-[4px] border-l border-[#aaa] bg-[#ddd]" />
          </div>
        </div>
      </div>

      <div className="absolute top-px left-[207px] h-6 w-[77px] border-[3px] border-[#fb3838]" />
      <div className="absolute top-[197px] left-[327px] h-[142px] w-[315px] border-[3px] border-[#fb3838]" />
      <svg viewBox="0 0 1915 486" className="pointer-events-none absolute inset-0 h-[486px] w-[1915px]" fill="#fb3838">
        <path d="M243.500 37h1.500l3.500 52 5-1.500-8.500 17.500-8-15.500 5 .5z" />
        <path d="M456 129.500L640 168 787 199.500l1.500-4.700L803 205.500l-18 6 .8-4.500L640 173.800 550 151 456 131z" />
      </svg>
      <div className="absolute top-[118px] left-[253px] font-['Noto_Sans_CJK_SC',sans-serif] text-[20px] leading-[22px] whitespace-pre text-[#fb3838] [font-stretch:normal]">选择<span className="font-['Open_Sans','Noto_Sans',sans-serif] tracking-[0.6px]">Run-&gt;Run -All</span></div>
      <div className="absolute top-[161px] left-[830px] font-['Noto_Sans_CJK_SC',sans-serif] text-[20px] leading-[22px] font-light text-[#fb3838] [font-stretch:normal]">得到波形</div>
    </div>
  );
}
